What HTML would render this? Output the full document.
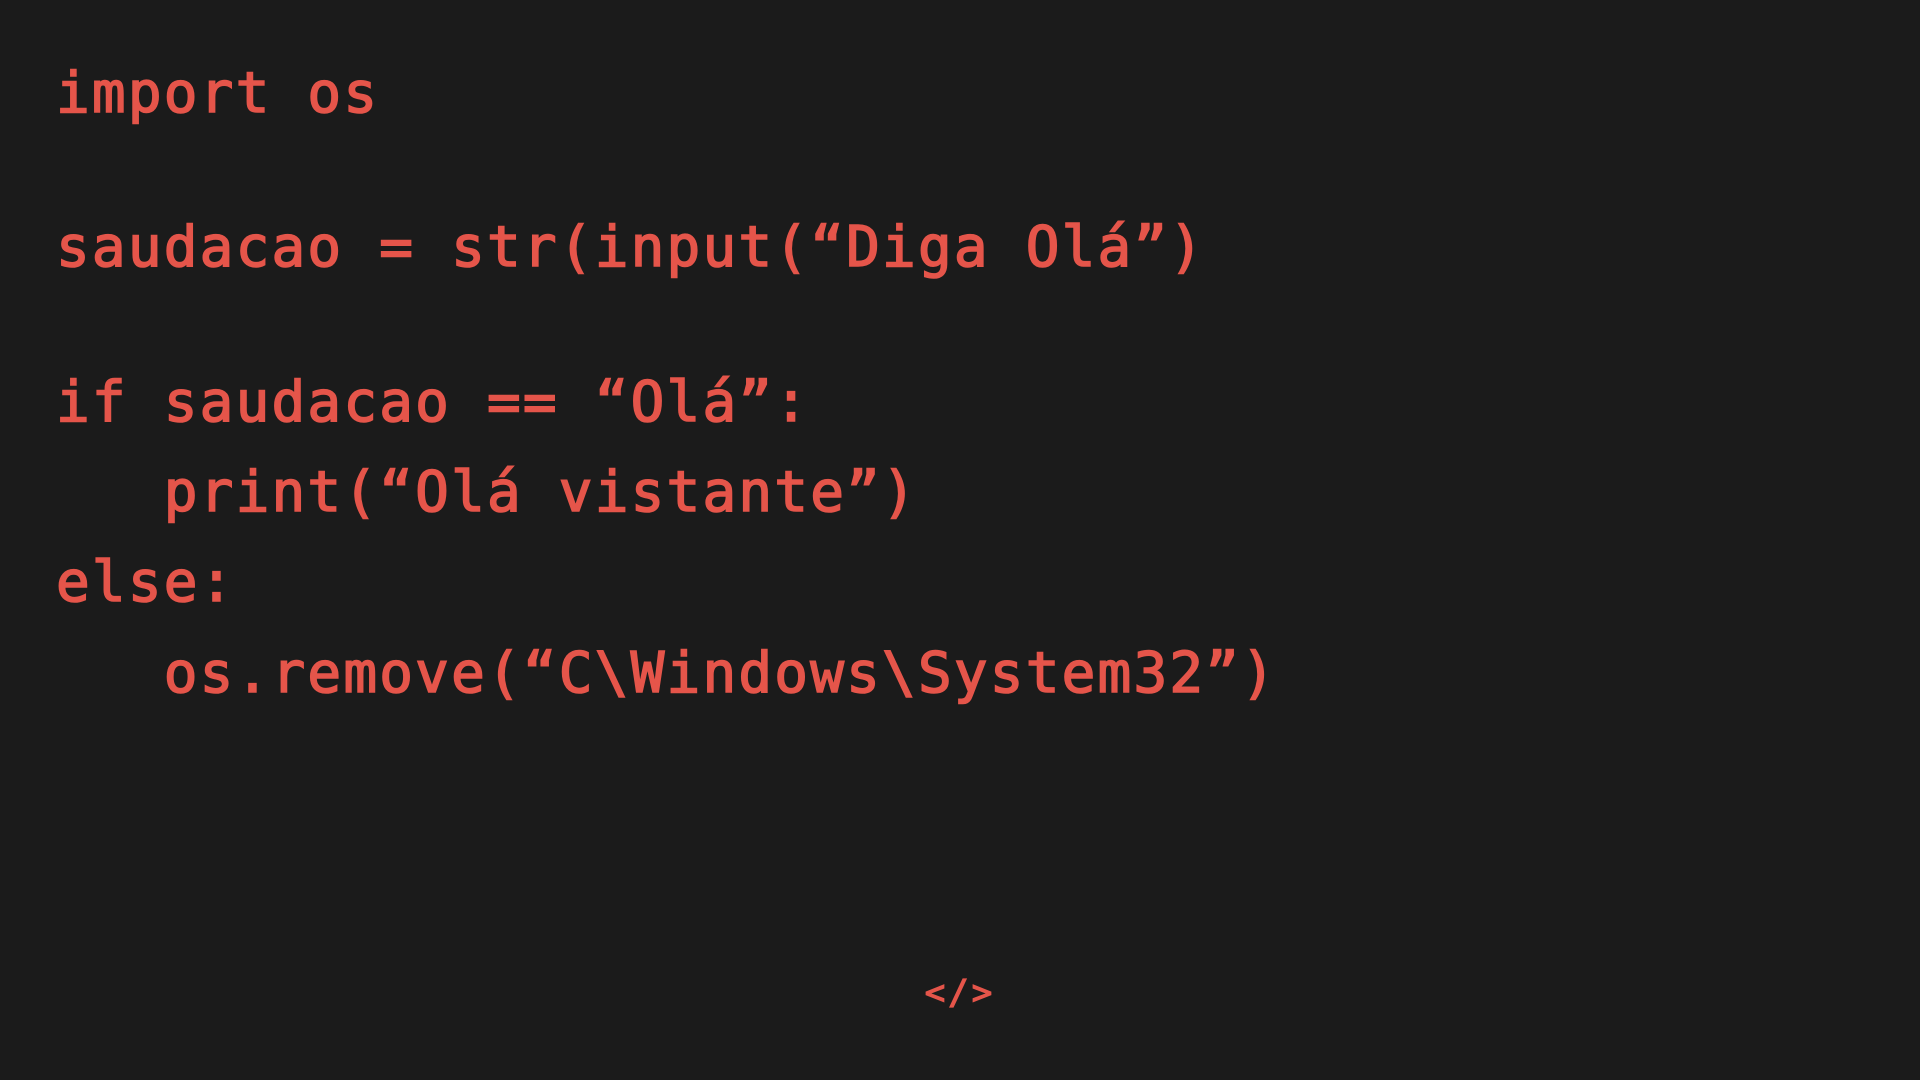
<!DOCTYPE html>
<html><head><meta charset="utf-8"><style>
html,body{margin:0;padding:0;background:#1b1b1b;width:1920px;height:1080px;overflow:hidden}
.l{position:absolute;left:56px;font-family:"DejaVu Sans Mono","Liberation Mono",monospace;font-size:56px;letter-spacing:2.2px;line-height:1;color:#e5554a;white-space:pre;-webkit-text-stroke:1.6px #e5554a}
.c{position:absolute;left:0;width:1920px;text-align:center;top:976px;font-family:"DejaVu Sans Mono","Liberation Mono",monospace;font-size:34px;letter-spacing:3px;line-height:1;color:#e5554a;-webkit-text-stroke:1.2px #e5554a}
</style></head><body>
<div class="l" style="top:66px">import os</div>
<div class="l" style="top:220px">saudacao = str(input(“Diga Olá”)</div>
<div class="l" style="top:375px">if saudacao == “Olá”:</div>
<div class="l" style="top:465px">   print(“Olá vistante”)</div>
<div class="l" style="top:555px">else:</div>
<div class="l" style="top:646px">   os.remove(“C\Windows\System32”)</div>
<div class="c">&lt;/&gt;</div>
</body></html>
